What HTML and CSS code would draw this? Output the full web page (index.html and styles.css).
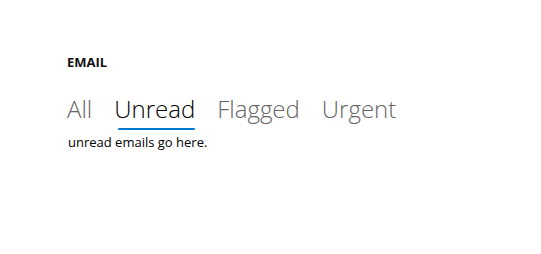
FILE: index.html
```html
<!DOCTYPE html>
<html lang="en">
<head>
    <meta charset="UTF-8">
    <meta name="viewport" content="width=device-width, initial-scale=1.0">
    <title>Email</title>
    <link rel="stylesheet" href="styles.css">
</head>
<body>
<div class="container">
    <h2 class="title">EMAIL</h2>
    <div class="pivot">
        <button class="pivot-item">All</button>
        <button class="pivot-item selected">Unread</button>
        <button class="pivot-item">Flagged</button>
        <button class="pivot-item">Urgent</button>
    </div>
    <p class="pivot-content">unread emails go here.</p>
</div>
</body>
</html>
```

FILE: styles.css
```css
body {
    font-family: 'Open Sans', 'Noto Sans', sans-serif;
    background-color: #fff;
    color: #000;
    margin: 0;
    padding: 0;
}

.container {
    padding: 52px 0 0 67px;
}

.title {
    font-size: 13px;
    font-weight: 700;
    margin: 0;
    line-height: 20px;
    color: #111;
}

.pivot {
    display: flex;
    gap: 22px;
    margin-top: 22px;
}

.pivot-item {
    font-family: inherit;
    font-size: 24px;
    font-weight: 300;
    color: #666;
    background: none;
    border: none;
    padding: 0 0 8px 0;
    line-height: 30px;
    position: relative;
    cursor: pointer;
}

.pivot-item.selected {
    color: #000;
}

.pivot-item.selected::after {
    content: '';
    position: absolute;
    left: 4px;
    right: 0;
    bottom: 2px;
    height: 2px;
    border-radius: 1px;
    background-color: #0078d4;
}

.pivot-content {
    font-size: 13px;
    margin: 1px 0 0 1px;
    line-height: 18px;
}
```
